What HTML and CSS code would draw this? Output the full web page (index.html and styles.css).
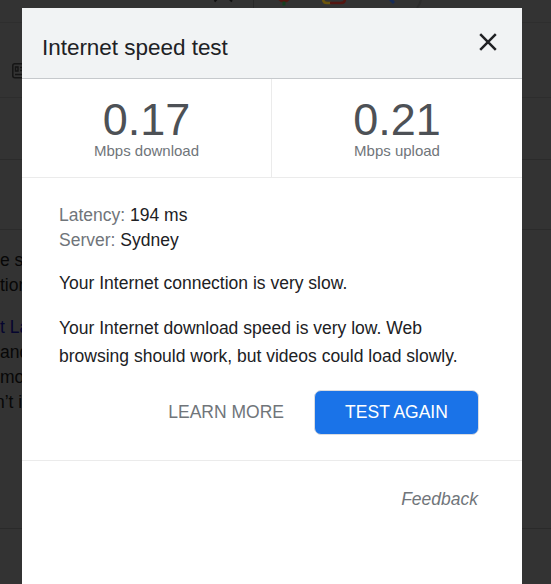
FILE: index.html
```html
<!DOCTYPE html>
<html lang="en">
  <head>
    <meta charset="UTF-8" />
    <meta name="viewport" content="width=device-width, initial-scale=1.0" />
    <title>Internet speed test</title>
    <link rel="stylesheet" href="styles.css">
  </head>
  <body>
    <div class="page">
      <div class="searchbar">
        <svg width="551" height="8" viewBox="0 0 551 8">
          <path d="M214.500 1.500l3-3M229 -1.500l3 3" stroke="#111" stroke-width="2" fill="none" />
          <path d="M253.500 0v8" stroke="#292929" />
          <path d="M278.500 0h11q-2 2.500-5.500 2.500t-5.500-2.500z" fill="#531611" />
          <path d="M284 1.500v4" stroke="#14401f" stroke-width="3" />
          <path d="M323 -1q0 4 4 4h4" stroke="#6b540b" stroke-width="2.500" fill="none" />
          <path d="M330 3h11q4 0 4-4" stroke="#531611" stroke-width="2.500" fill="none" />
          <path d="M390 -1l4 4" stroke="#182c57" stroke-width="3" />
          <path d="M421 0q-1 4-4 8" stroke="#2d2d2d" stroke-width="2" fill="none" />
        </svg>
      </div>
      <div class="tabs">
        <svg width="16" height="16" viewBox="0 0 16 16" fill="none" stroke="#151515">
          <rect x="0.800" y="0.800" width="17" height="14" rx="2" stroke-width="1.500" />
          <path d="M3.500 4h2.500v4h-2.500zM8 4.500h6M8 7.500h6M3 11.500h12" stroke-width="1.400" />
        </svg>
      </div>
      <div class="row row-stats"></div>
      <div class="row row-rule"></div>
      <div class="article">
        <p><span>e s</span><span>tion</span></p>
        <p><a>t La</a><span>and</span><span>mov</span><span class="cut-n">n’t i</span></p>
      </div>
    </div>

    <div class="modal">
      <div class="modal-header">
        <h1>Internet speed test</h1>
        <svg class="close" width="18" height="18" viewBox="0 0 18 18">
          <path d="M1.200 1.200l15.600 15.600M16.800 1.200L1.200 16.800" stroke="#202124" stroke-width="2.500" />
        </svg>
      </div>
      <div class="speeds">
        <div class="speed">
          <div class="number">0.17</div>
          <div class="unit">Mbps download</div>
        </div>
        <div class="speed">
          <div class="number">0.21</div>
          <div class="unit">Mbps upload</div>
        </div>
      </div>
      <div class="details">
        <div class="stat"><span>Latency:</span> 194 ms</div>
        <div class="stat"><span>Server:</span> Sydney</div>
        <p class="summary">Your Internet connection is very slow.</p>
        <p>Your Internet download speed is very low. Web browsing should work, but videos could load slowly.</p>
        <div class="actions">
          <button class="learn">LEARN MORE</button>
          <button class="again">TEST AGAIN</button>
        </div>
      </div>
      <div class="feedback">Feedback</div>
    </div>
  </body>
</html>
```

FILE: styles.css
```css
* {
  box-sizing: border-box;
}
body {
  margin: 0;
  height: 584px;
  overflow: hidden;
  background-color: #333;
  font-family: "Liberation Sans", Arial, sans-serif;
  font-size: 17.5px;
}
svg {
  display: block;
}
.page {
  height: 584px;
}
.searchbar {
  height: 23px;
  border-bottom: 1px solid #2e2e2e;
}
.tabs {
  height: 75px;
  padding: 40px 0 0 12px;
  border-bottom: 1px solid #2d2d2d;
}
.row {
  border-bottom: 1px solid #2b2b2b;
}
.row-stats {
  height: 62px;
}
.row-rule {
  height: 70px;
}
.article {
  height: 299px;
  padding-top: 18px;
  border-bottom: 1px solid #2a2a2a;
  color: #070707;
  line-height: 25px;
}
.article p {
  margin: 0 0 17px;
}
.article span,
.article a {
  display: block;
}
.article a {
  color: #05052f;
}
.article .cut-n {
  margin-left: -5px;
}
.modal {
  position: absolute;
  top: 8px;
  left: 22px;
  width: 500px;
  height: 576px;
  background-color: #fff;
  color: #202124;
}
.modal-header {
  display: flex;
  align-items: center;
  justify-content: space-between;
  height: 71px;
  padding: 0 25px 0 20px;
  background-color: #f1f3f4;
  border-bottom: 1px solid #c6c9cc;
}
.close {
  margin-bottom: 2px;
}
h1 {
  margin: 9px 0 0;
  font-size: 22.5px;
  font-weight: normal;
  letter-spacing: -0.03px;
}
.speeds {
  display: flex;
  height: 99px;
  border-bottom: 1px solid #ebebeb;
}
.speed {
  width: 250px;
  padding-top: 17px;
  text-align: center;
}
.speed:first-child {
  border-right: 1px solid #ebebeb;
}
.number {
  color: #4d5156;
  font-size: 45px;
  line-height: 48px;
}
.unit {
  margin-top: -2px;
  color: #70757a;
  font-size: 15px;
  line-height: 17px;
}
.details {
  height: 283px;
  padding: 25px 43px 0 37px;
  border-bottom: 1px solid #ebebeb;
}
.stat {
  line-height: 25px;
}
.stat span {
  color: #70757a;
}
.details p {
  margin: 17px 0 0;
  line-height: 28px;
}
.details .summary {
  margin-top: 16px;
}
.actions {
  display: flex;
  justify-content: flex-end;
  margin-top: 20px;
}
button {
  height: 45px;
  padding: 0;
  border: 1px solid transparent;
  border-radius: 7px;
  background: none;
  color: #70757a;
  font-family: inherit;
  font-size: 17.5px;
}
.learn {
  margin-right: 29px;
}
.again {
  width: 165px;
  border-color: #dadce0;
  background-color: #1a73e8;
  color: #fff;
}
.feedback {
  padding: 28px 44px 0 0;
  color: #70757a;
  font-style: italic;
  text-align: right;
}
```
